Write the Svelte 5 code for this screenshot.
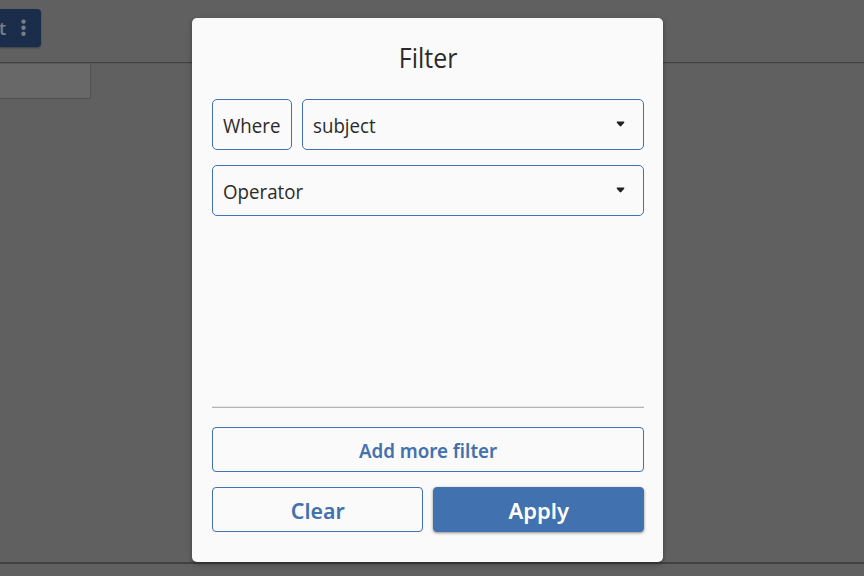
<script>
  let subject = $state('subject');
  let operator = $state('Operator');
</script>

{#snippet caret()}
  <svg class="caret" width="9" height="7" viewBox="0 0 9 7" aria-hidden="true">
    <path d="M1.2 .6H7.8Q8.6 .6 8.2 1.7L5.3 5Q4.5 5.9 3.7 5L.8 1.7Q.4 .6 1.2 .6Z" />
  </svg>
{/snippet}

<div class="screen">
  <div class="page">
    <header>
      <div class="tab">
        <span>t</span>
        <svg width="5" height="18" viewBox="0 0 5 18">
          <circle cx="2.5" cy="2.6" r="2.2" /><circle cx="2.5" cy="8.7" r="2.2" /><circle cx="2.5" cy="14.8" r="2.2" />
        </svg>
      </div>
    </header>
    <main><div class="cell"></div></main>
    <footer></footer>
  </div>

  <section class="modal" role="dialog" aria-label="Filter">
    <h1><span class="t-title">Filter</span></h1>
    <div class="row">
      <div class="box where"><span class="t-field">Where</span></div>
      <div class="box select"><span class="t-field">{subject}</span>{@render caret()}</div>
    </div>
    <div class="box select second"><span class="t-field">{operator}</span>{@render caret()}</div>
    <div class="space"></div>
    <button class="add"><span class="t-add">Add more filter</span></button>
    <div class="actions">
      <button><span class="t-clear">Clear</span></button>
      <button class="apply"><span>Apply</span></button>
    </div>
  </section>
</div>

<style>
  .screen, .screen * { box-sizing: border-box; }
  .screen {
    position: relative;
    width: 864px;
    height: 576px;
    overflow: hidden;
    background: #606060;
    font-family: "Open Sans", "Noto Sans", sans-serif;
    color: #2a2a2a;
  }
  .page { height: 576px; display: flex; flex-direction: column; }
  header { height: 64px; padding-top: 9px; border-bottom: 1px solid #595959; box-shadow: inset 0 -1px #424242; }
  .tab {
    display: flex;
    align-items: center;
    width: 41px;
    height: 38px;
    border-radius: 0 4px 4px 0;
    background: #1a2e4b;
    box-shadow: 0 1px 2px rgba(0, 0, 0, .35);
    color: #7a7e84;
    font-size: 18px;
    font-weight: 600;
  }
  .tab span { width: 22px; margin-left: -1px; line-height: 38px; }
  .tab svg { fill: #7a7e84; }
  main { flex: 1; }
  .cell { width: 91px; height: 35px; background: #686868; border: solid #505050; border-width: 0 1px 1px 0; }
  footer { height: 14px; border-top: 2px solid #424242; }
  .modal {
    position: absolute;
    left: 192.3px;
    top: 17.5px;
    width: 471px;
    height: 544px;
    padding: 18.5px 19px 0 19.7px;
    display: flex;
    flex-direction: column;
    border-radius: 5px;
    background: #fafafa;
    box-shadow: 0 2px 5px rgba(0, 0, 0, .35);
  }
  span { display: inline-block; white-space: nowrap; }
  h1 { margin: 0; height: 63px; line-height: 45px; font-size: 26.5px; font-weight: 400; text-align: center; }
  .t-title { transform: scaleX(.94); }
  .t-field { transform: scaleX(.935); transform-origin: 0 50%; }
  .t-add { transform: scaleX(.96); padding-top: 1px; }
  .t-clear { transform: scaleX(.97); }
  .row { display: flex; gap: 10px; height: 51px; }
  .box {
    display: flex;
    align-items: center;
    height: 51px;
    padding: 2px 10px 0 10.5px;
    border: 1px solid #4171af;
    border-radius: 5px;
    font-size: 20px;
  }
  .where { width: 80px; }
  .select { justify-content: space-between; padding-right: 18px; }
  .row .select { flex: 1; }
  .second { margin-top: 15px; }
  .caret { fill: #212121; margin-top: -1.5px; }
  .space { height: 192px; border-bottom: 1px solid #b3b3b3; box-shadow: inset 0 -1px #e6e6e6; margin-bottom: 19px; }
  button {
    display: flex;
    align-items: center;
    justify-content: center;
    flex: 1;
    height: 45px;
    padding: 0;
    border: 1px solid #4171af;
    border-radius: 4px;
    background: #fafafa;
    color: #4171af;
    font: 600 22px "Noto Sans", "Open Sans", sans-serif;
  }
  .add { flex: none; font-size: 19.5px; }
  .actions { display: flex; gap: 10px; margin-top: 15px; height: 45px; }
  .apply { background: #4171af; color: #fff; box-shadow: 0 1px 3px rgba(0, 0, 0, .45); }
</style>
